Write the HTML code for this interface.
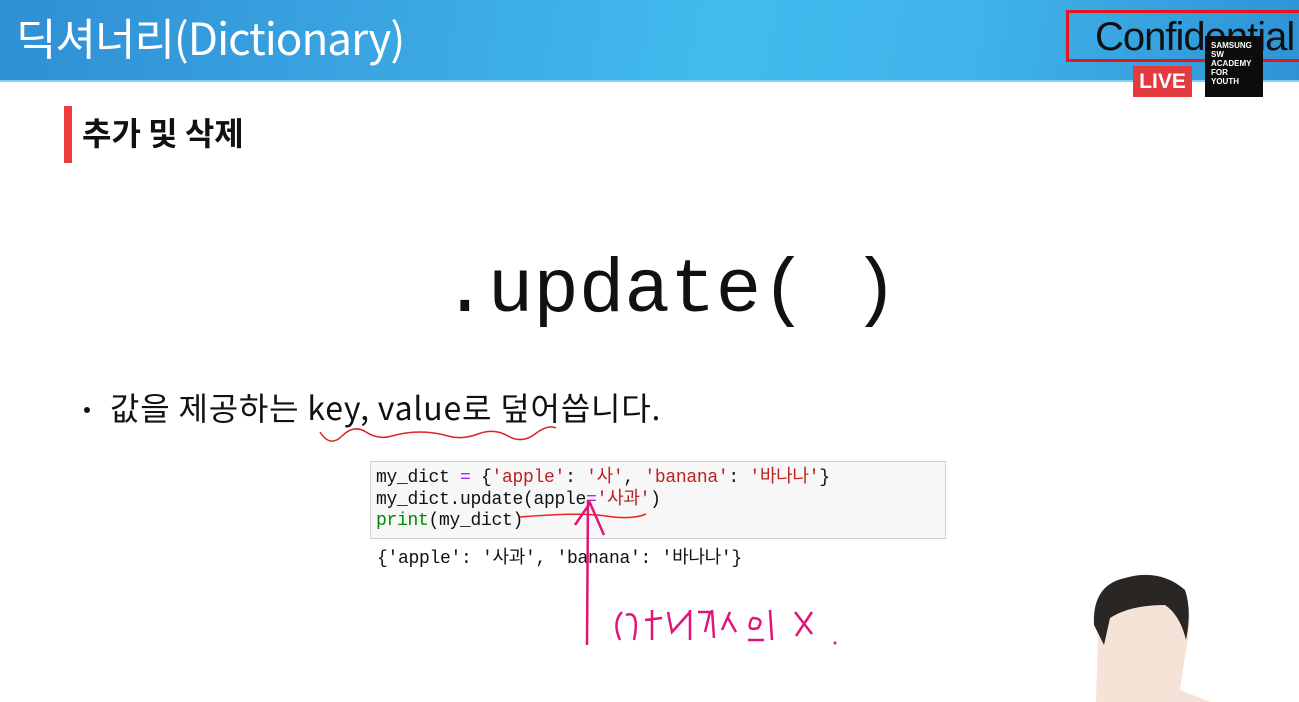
<!DOCTYPE html>
<html><head><meta charset="utf-8"><style>
body{margin:0;width:1299px;height:702px;overflow:hidden;background:#fff;position:relative;font-family:"Liberation Sans","Noto Sans CJK KR",sans-serif}
.hdr{position:absolute;left:0;top:0;width:1299px;height:80px;background:linear-gradient(100deg,#2f8fd4 0%,#3aa6e2 30%,#41bbee 55%,#3fb3ea 75%,#2e93d6 100%);border-bottom:2px solid #7fd0f5}
.t{position:absolute;left:16px;top:8px;color:#fff;font-size:44px;letter-spacing:-1px;font-family:"Noto Sans CJK KR","Liberation Sans",sans-serif;line-height:56px}
.conf{position:absolute;left:1066px;top:10px;width:240px;height:52px;border:3px solid #e4161c;box-sizing:border-box;font-size:40px;line-height:48px;padding-left:26px;color:#111;letter-spacing:-1px}
.live{position:absolute;left:1133px;top:66px;width:59px;height:31px;background:#e23a3f;color:#fff;font-weight:bold;font-size:21px;text-align:center;line-height:31px}
.logo{position:absolute;left:1205px;top:36px;width:58px;height:61px;background:#0c0c0c;color:#fff;font-size:8px;font-weight:bold;line-height:9px;padding:5px 0 0 6px;box-sizing:border-box}
.bar{position:absolute;left:64px;top:106px;width:8px;height:57px;background:#ee3d3d}
.sub{position:absolute;left:82px;top:110px;font-size:32px;font-weight:bold;line-height:44px;color:#111;font-family:"Noto Sans CJK KR",sans-serif}
.up{position:absolute;left:442px;top:246px;font-family:"Liberation Mono",monospace;font-size:76px;line-height:90px;color:#111}
.bl{position:absolute;left:110px;top:385px;font-size:32px;line-height:44px;color:#111;letter-spacing:0.8px;font-family:"Noto Sans CJK KR",sans-serif}
.dot{position:absolute;left:84px;top:407px;width:6px;height:6px;border-radius:50%;background:#111}
.code{position:absolute;left:370px;top:461px;width:576px;height:78px;background:#f7f7f7;border:1px solid #cfcfcf;box-sizing:border-box}
pre{margin:0;font-family:"Liberation Mono","Noto Sans CJK KR",monospace;font-size:18px;line-height:21.5px;color:#111;letter-spacing:-0.3px}
.s{color:#b22}.p{color:#a2f}.g{color:#080}
</style></head><body>
<div class="hdr"></div>
<div class="t">딕셔너리(Dictionary)</div>
<div class="conf">Confidential</div>
<div class="live">LIVE</div>
<div class="logo">SAMSUNG<br>SW<br>ACADEMY<br>FOR<br>YOUTH</div>
<div class="bar"></div>
<div class="sub">추가 및 삭제</div>
<div class="up">.update( )</div>
<div class="dot"></div>
<div class="bl">값을 제공하는 key, value로 덮어씁니다.</div>
<div class="code"><pre style="position:absolute;left:5px;top:6px">my_dict <span class="p">=</span> {<span class="s">'apple'</span>: <span class="s">'사'</span>, <span class="s">'banana'</span>: <span class="s">'바나나'</span>}
my_dict.update(apple<span class="p">=</span><span class="s">'사과'</span>)
<span class="g">print</span>(my_dict)</pre></div>
<pre style="position:absolute;left:377px;top:549px">{'apple': '사과', 'banana': '바나나'}</pre>
<svg style="position:absolute;left:0;top:0" width="1299" height="702">
<path d="M320 432 Q330 448 342 436 T366 432 T392 436 T420 432 T448 436 T478 434 T508 436 T535 434 T556 428" fill="none" stroke="#d22" stroke-width="1.5"/>
<path d="M520 517 Q580 512 606 516 T646 514" fill="none" stroke="#e22" stroke-width="1.5"/>
<path d="M587 645 L588 500 M575 525 L590 503 L604 535" fill="none" stroke="#e0157a" stroke-width="2.5"/>
<path d="M620 640 Q612 622 622 612 M626 615 Q640 610 634 640 M645 620 L662 618 M652 610 L652 640 M668 612 L672 632 L690 612 M690 610 L690 640 M698 612 L710 612 L705 632 M712 610 L714 638 M730 612 L722 630 M728 618 L736 632 M752 618 Q745 632 758 628 Q765 618 752 618 M748 640 L764 640 M770 610 L772 640 M795 612 L812 634 M812 612 L796 636" fill="none" stroke="#e0157a" stroke-width="2.5"/>
<circle cx="835" cy="643" r="1.5" fill="#e0157a"/>
<path d="M1096 702 L1098 640 Q1092 600 1120 585 Q1150 570 1180 588 Q1195 605 1186 650 L1180 690 L1210 702 Z" fill="#f4e3d6"/>
<path d="M1094 625 Q1092 585 1125 578 Q1160 568 1185 590 Q1192 610 1186 640 Q1180 615 1165 605 Q1130 605 1110 618 L1104 645 Z" fill="#2a2624"/>
</svg>
</body></html>
